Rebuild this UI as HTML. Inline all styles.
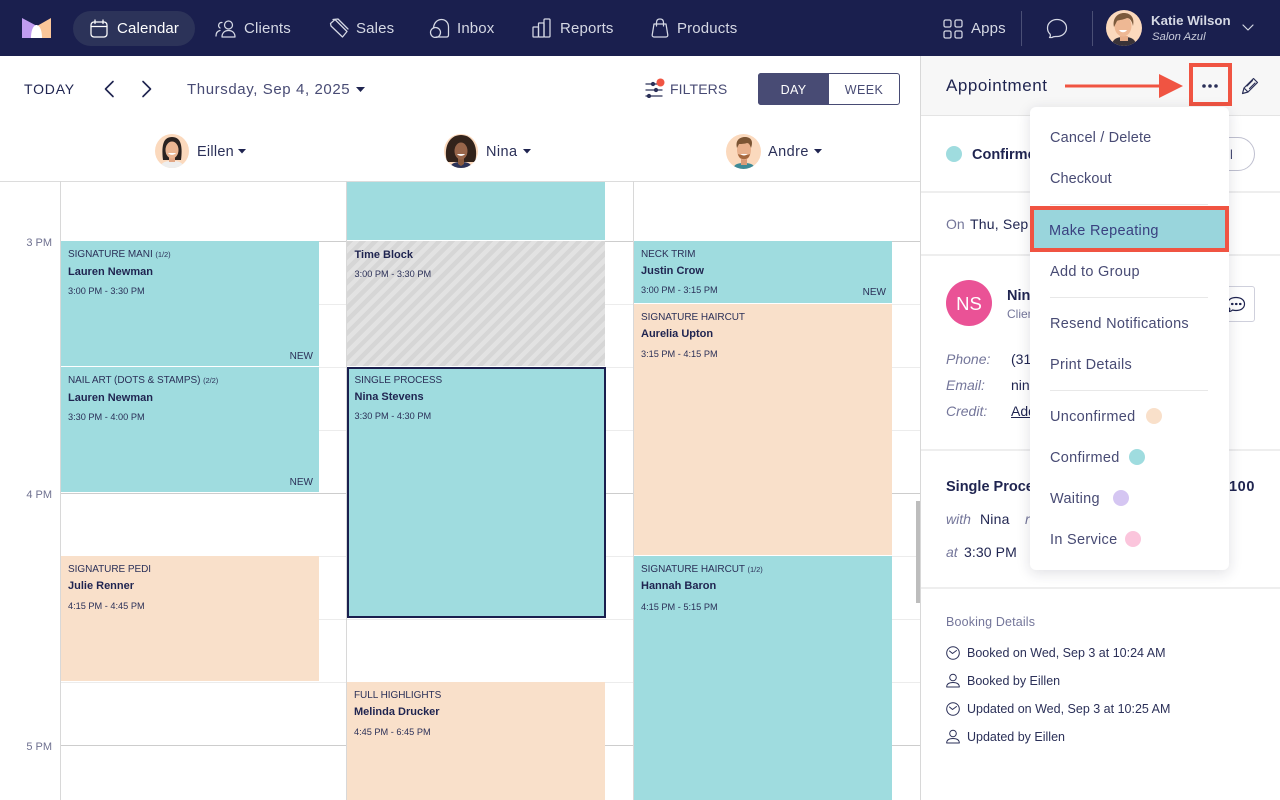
<!DOCTYPE html>
<html><head><meta charset="utf-8"><style>
html,body{margin:0;padding:0;width:1280px;height:800px;overflow:hidden;background:#fff;font-family:"Liberation Sans",sans-serif;color:#1a1f4e}
*{box-sizing:border-box}
.a,.t,svg.i{position:absolute}
.t{white-space:nowrap;line-height:20px;height:20px}
.n{color:#d5d8e4;font-size:15px;letter-spacing:.15px;top:19px}
.ev{position:absolute;overflow:hidden}
.teal{background:#9fdcdf}.peach{background:#f9e0ca}
.ev .s{position:absolute;left:7px;top:8px;font-size:10px;line-height:12px;color:#2b3058;white-space:nowrap;letter-spacing:-.05px}
.ev .s small{font-size:7.5px}
.ev .m{position:absolute;left:7px;top:23px;font-size:11px;line-height:14px;font-weight:bold;color:#1f2450;white-space:nowrap}
.ev .h{position:absolute;left:7px;top:44px;font-size:9.2px;line-height:12px;color:#2b3058;white-space:nowrap}
.ev .w{position:absolute;right:6px;bottom:3px;font-size:10px;line-height:12px;color:#2b3058}
.hl{position:absolute;left:60px;width:860px;height:1px;background:#ececec}
.hd{background:#cdcdcd}
.vl{position:absolute;top:181px;bottom:0;width:1px;background:#d8d8d8}
.tm{position:absolute;left:0;width:52px;text-align:right;font-size:11px;color:#6f7190;line-height:14px}
.mi{color:#484b74;font-size:14.5px;letter-spacing:.3px;left:1050px}
.dv{position:absolute;left:921px;width:359px;height:2px;background:#eee}
.dot{position:absolute;width:16px;height:16px;border-radius:50%}
.lb{color:#74769a;font-size:14px;font-style:italic;left:946px}
.vb{color:#1f2450;font-size:14px}
.bk{color:#2b3058;font-size:12.5px;left:967px}
svg.i{fill:none;stroke:#d5d8e4;stroke-width:1.25;stroke-linecap:round;stroke-linejoin:round}
</style></head><body>

<!-- top nav -->
<div class="a" style="left:0;top:0;width:1280px;height:56px;background:#1a1f4e"></div>
<svg class="a" style="left:22px;top:18px" width="30" height="20" viewBox="0 0 30 20"><path d="M0 0 L15 8 L15 20 L0 20Z" fill="#c09cf0"/><path d="M29 0 L15 8 L15 20 L29 20Z" fill="#fbc699"/><path d="M9 20 C9 11 12 7 14.500 7 C17 7 20 11 20 20Z" fill="#fff"/></svg>
<div class="a" style="left:73px;top:11px;width:122px;height:35px;border-radius:18px;background:#2c3359"></div>

<svg class="i" style="left:90px;top:19px;stroke:#fff" width="18" height="19" viewBox="0 0 18 19"><rect x="1" y="3" width="16" height="15" rx="3"/><path d="M1 7.500H17M5 1V4.500M13 1V4.500"/></svg>
<div class="t n" style="left:117px;color:#fff">Calendar</div>

<svg class="i" style="left:215px;top:19px" width="21" height="19" viewBox="0 0 21 19"><circle cx="13.500" cy="6" r="4"/><path d="M7 18c0-4.500 3-6.500 6.500-6.500S20 13.500 20 18ZM7 3.500a3 3 0 0 0-2 5.500M1 17c0-3 1.500-5 4-5.500"/></svg>
<div class="t n" style="left:244px">Clients</div>

<svg class="i" style="left:329px;top:18px" width="20" height="20" viewBox="0 0 20 20"><path d="M1.500 5.500 6 1.500 18 13.500 13.500 19 2 8Z"/><path d="M4 1.500 9 1 19 11"/></svg>
<div class="t n" style="left:356px">Sales</div>

<svg class="i" style="left:429px;top:18px" width="21" height="20" viewBox="0 0 21 20"><path d="M7 19H17.500C19 19 19.500 18 19.500 17V9C19.500 4 16 1.500 12.500 1.500S5 4 4.500 10"/><circle cx="6.500" cy="14.500" r="5"/></svg>
<div class="t n" style="left:457px">Inbox</div>

<svg class="i" style="left:532px;top:18px" width="19" height="20" viewBox="0 0 19 20"><rect x="1" y="9" width="5.500" height="10" rx=".5"/><rect x="6.500" y="5" width="5.500" height="14" rx=".5"/><rect x="12" y="1" width="6" height="18" rx="1"/></svg>
<div class="t n" style="left:560px">Reports</div>

<svg class="i" style="left:651px;top:18px" width="18" height="20" viewBox="0 0 18 20"><path d="M3 6H15L16.800 17C17 18.300 16 19 15 19H3C2 19 1 18.300 1.200 17Z"/><path d="M5.500 8V4.500C5.500 2 7 1 9 1S12.500 2 12.500 4.500V8"/></svg>
<div class="t n" style="left:677px">Products</div>

<svg class="i" style="left:943px;top:19px" width="20" height="20" viewBox="0 0 20 20"><rect x="1" y="1" width="7" height="7" rx="1.500"/><rect x="12" y="1" width="7" height="7" rx="1.500"/><rect x="1" y="12" width="7" height="7" rx="1.500"/><rect x="12" y="12" width="7" height="7" rx="1.500"/></svg>
<div class="t n" style="left:971px">Apps</div>
<div class="a" style="left:1021px;top:11px;width:1px;height:35px;background:#4a4f75"></div>
<svg class="i" style="left:1046px;top:18px" width="22" height="21" viewBox="0 0 22 21"><path d="M11 1.500C16 1.500 20.500 5 20.500 10S16 18.500 11 18.500C9 18.500 7.500 18.200 6 19.500H3.500C4.500 18.300 4.500 16.800 4 16 2.300 14.500 1.500 12.500 1.500 10 1.500 5 6 1.500 11 1.500Z"/></svg>
<div class="a" style="left:1092px;top:11px;width:1px;height:35px;background:#4a4f75"></div>

<svg class="a" style="left:1106px;top:10px" width="36" height="36" viewBox="0 0 36 36"><defs><clipPath id="c0"><circle cx="18" cy="18" r="18"/></clipPath></defs><g clip-path="url(#c0)"><rect width="36" height="36" fill="#fbd9bd"/><path d="M6 36c0-7 5-9 12-9s12 2 12 9Z" fill="#3a3338"/><path d="M14 26h8v5h-8z" fill="#e6ac88"/><ellipse cx="17" cy="16" rx="8.500" ry="10.500" fill="#eeb894"/><path d="M8 17C6 8 12 3 18 3s11 4 9 13c-1-5-3-8-6-8-4 2-9 2-10 3-1 2-2 4-3 6Z" fill="#7c5a3c"/><path d="M13 20c2 3 6 3 8 0Z" fill="#fff"/></g></svg>
<div class="t" style="left:1151px;top:11px;color:#d5d8e4;font-size:13.300px;font-weight:bold">Katie Wilson</div>
<div class="t" style="left:1152px;top:27px;color:#c8cbda;font-size:11.300px;font-style:italic">Salon Azul</div>
<svg class="i" style="left:1242px;top:24px;stroke-width:1.200" width="12" height="8" viewBox="0 0 12 8"><path d="M1 1 6 6 11 1"/></svg>

<!-- toolbar -->
<div class="t" style="left:24px;top:79px;font-size:14px;letter-spacing:.8px;color:#1f2450">TODAY</div>
<svg class="i" style="left:103px;top:80px;stroke:#1f2450;stroke-width:1.600" width="12" height="18" viewBox="0 0 12 18"><path d="M10 1.500 2.500 9 10 16.500"/></svg>
<svg class="i" style="left:141px;top:80px;stroke:#1f2450;stroke-width:1.600" width="12" height="18" viewBox="0 0 12 18"><path d="M2 1.500 9.500 9 2 16.500"/></svg>
<div class="t" style="left:187px;top:80px;font-size:15px;letter-spacing:.6px;color:#484b74">Thursday, Sep 4, 2025</div>
<svg class="a" style="left:356px;top:87px" width="10" height="6"><path d="M0 0H9L4.500 5Z" fill="#1f2450"/></svg>

<svg class="i" style="left:645px;top:78px;stroke:#2b3058;stroke-width:1.300" width="24" height="20" viewBox="0 0 24 20"><path d="M1 6H17M1 12H17M1 18H17"/><circle cx="8" cy="6" r="1.500" fill="#2b3058"/><circle cx="11" cy="12" r="1.500" fill="#2b3058"/><circle cx="4" cy="18" r="1.500" fill="#2b3058"/><circle cx="15.500" cy="4.500" r="4" fill="#f05442" stroke="none"/></svg>
<div class="t" style="left:670px;top:79px;font-size:14px;letter-spacing:.12px;color:#484b74">FILTERS</div>
<div class="a" style="left:758px;top:73px;width:142px;height:32px;border:1px solid #484b74;border-radius:3px;background:#fff"></div>
<div class="a" style="left:758px;top:73px;width:71px;height:32px;background:#484b74;border-radius:3px 0 0 3px"></div>
<div class="t" style="left:758px;width:71px;text-align:center;top:80px;font-size:12.500px;letter-spacing:.3px;color:#fff">DAY</div>
<div class="t" style="left:829px;width:70px;text-align:center;top:80px;font-size:12.500px;letter-spacing:.4px;color:#484b74">WEEK</div>

<!-- staff -->
<svg class="a" style="left:155px;top:134px" width="34" height="34" viewBox="0 0 34 34"><defs><clipPath id="c1"><circle cx="17" cy="17" r="17"/></clipPath></defs><g clip-path="url(#c1)"><rect width="34" height="34" fill="#fbd9bd"/><path d="M8 26C6 10 9 3 17 3s11 7 9 23Z" fill="#2a2220"/><path d="M5 34c1-6 6-7 12-7s11 1 12 7Z" fill="#eeeeee"/><path d="M14 23h6v5h-6z" fill="#e2a785"/><ellipse cx="17" cy="16" rx="6.500" ry="8.500" fill="#eab592"/><path d="M13 19c2 2.500 6 2.500 8 0Z" fill="#fff"/></g></svg>
<div class="t" style="left:197px;top:142px;font-size:14.500px;letter-spacing:.25px;color:#2b3058">Eillen</div>
<svg class="a" style="left:238px;top:149px" width="9" height="6"><path d="M0 0H8L4 4.500Z" fill="#1f2450"/></svg>

<svg class="a" style="left:444px;top:134px" width="34" height="34" viewBox="0 0 34 34"><defs><clipPath id="c2"><circle cx="17" cy="17" r="17"/></clipPath></defs><g clip-path="url(#c2)"><rect width="34" height="34" fill="#fbd9bd"/><path d="M3 28C-1 12 6 1 17 1s18 11 14 27Z" fill="#33231b"/><path d="M6 34c1-5 5-6 11-6s10 1 11 6Z" fill="#2c3358"/><path d="M14 24h6v6l-3 2-3-2z" fill="#8a5a3e"/><ellipse cx="17" cy="17" rx="6.500" ry="8.500" fill="#98654a"/><path d="M13 20c2 2.500 6 2.500 8 0Z" fill="#fff"/></g></svg>
<div class="t" style="left:486px;top:142px;font-size:14.500px;letter-spacing:.4px;color:#2b3058">Nina</div>
<svg class="a" style="left:523px;top:149px" width="9" height="6"><path d="M0 0H8L4 4.500Z" fill="#1f2450"/></svg>

<svg class="a" style="left:726px;top:134px" width="35" height="35" viewBox="0 0 35 35"><defs><clipPath id="c3"><circle cx="17.500" cy="17.500" r="17.500"/></clipPath></defs><g clip-path="url(#c3)"><rect width="35" height="35" fill="#fbd9bd"/><path d="M7 35c1-5 5-6 11-6s10 1 11 6Z" fill="#3d8a97"/><path d="M15 25h6v6h-6z" fill="#d99b78"/><ellipse cx="18" cy="16" rx="7" ry="10" fill="#e8b08c"/><path d="M11 14C9 6 14 3 19 3s9 3 6 11c-1-3-2-5-4-5-3 1-7 1-8 1Z" fill="#7b5433"/><path d="M12 20c1 7 11 7 12 0-3 1.500-9 1.500-12 0Z" fill="#a5683f"/><path d="M14.500 20c2 2 5 2 7 0Z" fill="#fff"/></g></svg>
<div class="t" style="left:768px;top:142px;font-size:14.500px;letter-spacing:.45px;color:#2b3058">Andre</div>
<svg class="a" style="left:814px;top:149px" width="9" height="6"><path d="M0 0H8L4 4.500Z" fill="#1f2450"/></svg>

<!-- grid -->
<div class="a" style="left:0;top:181px;width:921px;height:1px;background:#dcdcdc"></div>
<div class="hl hd" style="top:241px"></div>
<div class="hl" style="top:304px"></div>
<div class="hl" style="top:367px"></div>
<div class="hl" style="top:430px"></div>
<div class="hl hd" style="top:493px"></div>
<div class="hl" style="top:556px"></div>
<div class="hl" style="top:619px"></div>
<div class="hl" style="top:682px"></div>
<div class="hl hd" style="top:745px"></div>
<div class="vl" style="left:60px"></div>
<div class="vl" style="left:346px"></div>
<div class="vl" style="left:633px"></div>
<div class="tm" style="top:236px">3 PM</div>
<div class="tm" style="top:488px">4 PM</div>
<div class="tm" style="top:740px">5 PM</div>

<!-- Eillen events -->
<div class="ev teal" style="left:61px;top:241px;width:258px;height:125px"><div class="s">SIGNATURE MANI <small>(1/2)</small></div><div class="m" style="top:24px">Lauren Newman</div><div class="h">3:00 PM - 3:30 PM</div><div class="w">NEW</div></div>
<div class="ev teal" style="left:61px;top:367px;width:258px;height:125px"><div class="s">NAIL ART (DOTS &amp; STAMPS) <small>(2/2)</small></div><div class="m" style="top:24px">Lauren Newman</div><div class="h">3:30 PM - 4:00 PM</div><div class="w">NEW</div></div>
<div class="ev peach" style="left:61px;top:556px;width:258px;height:125px"><div class="s">SIGNATURE PEDI</div><div class="m">Julie Renner</div><div class="h">4:15 PM - 4:45 PM</div></div>

<!-- Nina events -->
<div class="ev teal" style="left:347px;top:182px;width:258px;height:58px"></div>
<div class="ev" style="left:347px;top:241px;width:258px;height:125px;background:repeating-linear-gradient(135deg,#d6d6d6 0,#d6d6d6 4.5px,#e2e2e2 4.5px,#e2e2e2 9px)"><div class="m" style="top:7px;left:7.500px">Time Block</div><div class="h" style="top:27px;left:7.500px">3:00 PM - 3:30 PM</div></div>
<div class="ev teal" style="left:347px;top:367px;width:259px;height:251px;border:2px solid #1a1f4e"><div class="s" style="left:5.500px;top:6px">SINGLE PROCESS</div><div class="m" style="left:5.500px;top:21px">Nina Stevens</div><div class="h" style="left:5.500px;top:41px">3:30 PM - 4:30 PM</div></div>
<div class="ev peach" style="left:347px;top:682px;width:258px;height:118px"><div class="s">FULL HIGHLIGHTS</div><div class="m">Melinda Drucker</div><div class="h">4:45 PM - 6:45 PM</div></div>

<!-- Andre events -->
<div class="ev teal" style="left:634px;top:241px;width:258px;height:62px"><div class="s">NECK TRIM</div><div class="m" style="top:23px">Justin Crow</div><div class="h" style="top:43px">3:00 PM - 3:15 PM</div><div class="w" style="bottom:4px">NEW</div></div>
<div class="ev peach" style="left:634px;top:304px;width:258px;height:251px"><div class="s">SIGNATURE HAIRCUT</div><div class="m">Aurelia Upton</div><div class="h">3:15 PM - 4:15 PM</div></div>
<div class="ev teal" style="left:634px;top:556px;width:258px;height:244px"><div class="s">SIGNATURE HAIRCUT <small>(1/2)</small></div><div class="m" style="top:23px">Hannah Baron</div><div class="h" style="top:45px">4:15 PM - 5:15 PM</div></div>

<!-- scrollbar -->
<div class="a" style="left:916px;top:501px;width:4px;height:102px;background:#bdbdbd"></div>

<!-- right panel -->
<div class="a" style="left:920px;top:56px;width:1px;height:744px;background:#d8d8d8"></div>
<div class="a" style="left:921px;top:56px;width:359px;height:60px;background:#f7f7f7;border-bottom:1px solid #e4e4e4"></div>
<div class="t" style="left:946px;top:76px;font-size:17px;letter-spacing:.55px;color:#1f2450">Appointment</div>
<svg class="a" style="left:1065px;top:73px" width="120" height="26"><rect x="0" y="11.500" width="96" height="3" fill="#f05442"/><path d="M94 1 118 13 94 25Z" fill="#f05442"/></svg>
<div class="a" style="left:1189px;top:63px;width:43px;height:43px;border:4px solid #f05442"></div>
<svg class="a" style="left:1201px;top:82px" width="18" height="8"><circle cx="3" cy="4" r="1.800" fill="#2b3058"/><circle cx="9" cy="4" r="1.800" fill="#2b3058"/><circle cx="15" cy="4" r="1.800" fill="#2b3058"/></svg>
<svg class="i" style="left:1241px;top:77px;stroke:#2b3058;stroke-width:1.200" width="18" height="18" viewBox="0 0 18 18"><path d="M1.500 16.500 3 11 12.500 1.500 16.500 5.500 7 15ZM3 11 7 15M6 9 11.500 3.500M8.500 11.500 14 6"/></svg>

<div class="dv" style="top:191px"></div>
<div class="dv" style="top:254px"></div>
<div class="dv" style="top:449px"></div>
<div class="dv" style="top:587px"></div>

<div class="dot" style="left:946px;top:146px;background:#9fdcdf"></div>
<div class="t" style="left:972px;top:145px;font-size:14.500px;font-weight:bold;color:#1f2450">Confirmed</div>
<div class="a" style="left:1180px;top:137px;width:75px;height:34px;border:1px solid #bfc0d0;border-radius:17px;background:#fff"></div>
<div class="t" style="left:1230px;top:145px;font-size:13px;color:#484b74">l</div>

<div class="t" style="left:946px;top:214px;font-size:14px;color:#74769a">On</div>
<div class="t" style="left:970px;top:214px;font-size:14px;letter-spacing:.2px;color:#1f2450">Thu, Sep 4</div>

<div class="a" style="left:946px;top:280px;width:46px;height:46px;border-radius:50%;background:#ea5296"></div>
<div class="t" style="left:946px;width:46px;text-align:center;top:294px;font-size:18.500px;color:#fff">NS</div>
<div class="t" style="left:1007px;top:286px;font-size:14.500px;font-weight:bold;color:#1f2450">Nina Stevens</div>
<div class="t" style="left:1007px;top:304px;font-size:12px;color:#74769a">Client</div>
<div class="a" style="left:1215px;top:286px;width:40px;height:36px;border:1px solid #cfd0dc;border-radius:3px;background:#fff"></div>
<svg class="i" style="left:1226px;top:296px;stroke:#1f2450;stroke-width:1.200" width="20" height="18" viewBox="0 0 20 18"><path d="M10 1.500C15 1.500 18.500 4 18.500 8S15 14.500 10 14.500C8.500 14.500 7.500 14.300 6.500 14 5.500 15 4 15.500 3 15.500 3.500 14.500 4 13.500 3.800 12.800 2.200 11.500 1.500 10 1.500 8 1.500 4 5 1.500 10 1.500Z"/><path d="M6 8h.5M10 8h.5M14 8h.5" stroke-width="2.200"/></svg>
<div class="t lb" style="top:349px">Phone:</div>
<div class="t lb" style="top:375px">Email:</div>
<div class="t lb" style="top:401px">Credit:</div>
<div class="t vb" style="left:1011px;top:349px">(312) 555</div>
<div class="t vb" style="left:1011px;top:375px">nina@mail</div>
<div class="t vb" style="left:1011px;top:401px;text-decoration:underline">Add</div>

<div class="t" style="left:946px;top:477px;font-size:14.500px;font-weight:bold;color:#1f2450">Single Process</div>
<div class="t" style="left:1229px;top:477px;font-size:14.500px;letter-spacing:.6px;font-weight:bold;color:#1f2450">100</div>
<div class="t" style="left:946px;top:509px;font-size:14px;font-style:italic;color:#74769a">with</div>
<div class="t vb" style="left:980px;top:509px;letter-spacing:.2px">Nina</div>
<div class="t" style="left:1025px;top:509px;font-size:14px;font-style:italic;color:#74769a">room</div>
<div class="t" style="left:946px;top:542px;font-size:14px;font-style:italic;color:#74769a">at</div>
<div class="t vb" style="left:964px;top:542px;letter-spacing:.1px">3:30 PM</div>

<div class="t" style="left:946px;top:612px;font-size:12.500px;letter-spacing:.15px;color:#74769a">Booking Details</div>

<svg class="i" style="left:946px;top:645px;stroke:#2b3058;stroke-width:1" width="14" height="16" viewBox="0 0 14 16"><ellipse cx="7" cy="8" rx="6.300" ry="6.300"/><path d="M3.500 6 6.500 8.500 10.500 5.500"/></svg>
<div class="t bk" style="top:643px">Booked on Wed, Sep 3 at 10:24 AM</div>
<svg class="i" style="left:946px;top:673px;stroke:#2b3058;stroke-width:1" width="14" height="15" viewBox="0 0 14 15"><circle cx="7" cy="4.500" r="3.300"/><path d="M.7 14C.7 10.500 3.500 9.500 7 9.500S13.300 10.500 13.300 14Z"/></svg>
<div class="t bk" style="top:671px">Booked by Eillen</div>
<svg class="i" style="left:946px;top:701px;stroke:#2b3058;stroke-width:1" width="14" height="16" viewBox="0 0 14 16"><ellipse cx="7" cy="8" rx="6.300" ry="6.300"/><path d="M3.500 6 6.500 8.500 10.500 5.500"/></svg>
<div class="t bk" style="top:699px">Updated on Wed, Sep 3 at 10:25 AM</div>
<svg class="i" style="left:946px;top:729px;stroke:#2b3058;stroke-width:1" width="14" height="15" viewBox="0 0 14 15"><circle cx="7" cy="4.500" r="3.300"/><path d="M.7 14C.7 10.500 3.500 9.500 7 9.500S13.300 10.500 13.300 14Z"/></svg>
<div class="t bk" style="top:727px">Updated by Eillen</div>

<!-- dropdown -->
<div class="a" style="left:1030px;top:107px;width:199px;height:463px;background:#fff;border-radius:6px;box-shadow:0 3px 14px rgba(30,30,60,.14)"></div>
<div class="t mi" style="top:128px;letter-spacing:.15px">Cancel / Delete</div>
<div class="t mi" style="top:169px;letter-spacing:.05px">Checkout</div>
<div class="a" style="left:1050px;top:204px;width:158px;height:1px;background:#e8e8e8"></div>
<div class="a" style="left:1030px;top:206px;width:199px;height:46px;background:#99d5dc;border:4px solid #f05442"></div>
<div class="t mi" style="top:221px;left:1049px;color:#3a4180">Make Repeating</div>
<div class="t mi" style="top:262px">Add to Group</div>
<div class="a" style="left:1050px;top:297px;width:158px;height:1px;background:#e8e8e8"></div>
<div class="t mi" style="top:314px">Resend Notifications</div>
<div class="t mi" style="top:355px">Print Details</div>
<div class="a" style="left:1050px;top:390px;width:158px;height:1px;background:#e8e8e8"></div>
<div class="t mi" style="top:407px">Unconfirmed</div><div class="dot" style="left:1146px;top:408px;background:#f9e0ca"></div>
<div class="t mi" style="top:448px">Confirmed</div><div class="dot" style="left:1129px;top:449px;background:#9fdcdf"></div>
<div class="t mi" style="top:489px">Waiting</div><div class="dot" style="left:1113px;top:490px;background:#d5c6f2"></div>
<div class="t mi" style="top:530px">In Service</div><div class="dot" style="left:1125px;top:531px;background:#fbc5dc"></div>

</body></html>
